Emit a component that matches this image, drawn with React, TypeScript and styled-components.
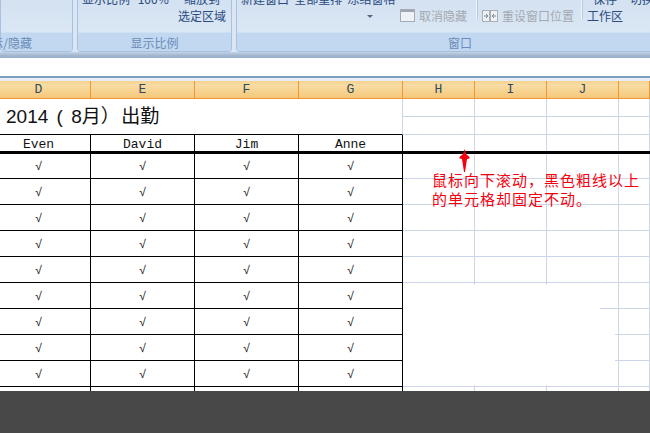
import React from "react";
import styled, { createGlobalStyle } from "styled-components";

const GlobalStyle = createGlobalStyle`
  html, body {
    margin: 0;
    padding: 0;
    background: #fff;
  }
`;

const Page = styled.div`
  width: 650px;
  height: 433px;
  display: flex;
  flex-direction: column;
  overflow: hidden;
  font-family: "Noto Sans CJK SC", "Liberation Sans", sans-serif;
  text-spacing-trim: space-all;
`;

/* ribbon */
const Ribbon = styled.div`
  height: 52px;
  flex: none;
  display: flex;
  gap: 4px;
  overflow: hidden;
  background: #dbe6f4;
`;

const Group = styled.section<{ $width: number }>`
  width: ${(p) => p.$width}px;
  flex: none;
  display: flex;
  flex-direction: column;
  box-sizing: border-box;
  border: 1px solid #a9c1de;
  border-top: 0;
  border-radius: 0 0 4px 4px;
  background: linear-gradient(#d3e1f1, #dfeaf6);
`;

const GroupBody = styled.div`
  height: 32px;
  flex: none;
  display: flex;
  align-items: flex-end;
  box-sizing: border-box;
  padding: 0 0 8px 4px;
`;

const Caption = styled.div<{ $clipLeft?: boolean }>`
  flex: 1;
  display: flex;
  align-items: center;
  justify-content: ${(p) => (p.$clipLeft ? "flex-end" : "center")};
  padding-right: ${(p) => (p.$clipLeft ? "40px" : "0")};
  font-size: 12px;
  color: #6b8bb8;
  background: #c1d8f0;
  border-top: 1px solid #cfe0f3;
  border-radius: 0 0 3px 3px;
  white-space: nowrap;
`;

const Stack = styled.div<{ $width: number; $align?: string }>`
  width: ${(p) => p.$width}px;
  flex: none;
  display: flex;
  flex-direction: column;
  align-items: ${(p) => p.$align || "flex-start"};
`;

const SwitchStack = styled(Stack)`
  margin-left: 7px;
`;

const Label = styled.div<{ $muted?: boolean; $wordGap?: number }>`
  height: 17px;
  line-height: 17px;
  font-size: 12px;
  white-space: nowrap;
  display: flex;
  align-items: center;
  gap: 4px;
  word-spacing: ${(p) => p.$wordGap || 0}px;
  color: ${(p) => (p.$muted ? "#a3a9b0" : "#2a4a80")};
`;

const Divider = styled.div`
  width: 1px;
  height: 19px;
  flex: none;
  margin: 0 5px 5px 0;
  align-self: flex-end;
  background: #eef4fb;
  box-shadow: 1px 0 0 #b5c9e2;
`;

const DropArrow = styled.div`
  width: 0;
  height: 0;
  margin: 5px 0 0 126px;
  border: 3px solid transparent;
  border-top: 3px solid #53678a;
`;

/* formula bar */
const RibbonEdge = styled.div`
  height: 6px;
  flex: none;
  background: linear-gradient(#c3d4e8, #a1b5cd 60%, #9bb0c9);
`;

const FormulaBar = styled.div`
  height: 18px;
  flex: none;
  background: #fff;
`;

const ColumnEdge = styled.div`
  height: 5px;
  flex: none;
  box-sizing: border-box;
  background: #e6edf6;
  border-top: 2px solid #7d9ebf;
`;

/* column headers */
const HeaderRow = styled.div`
  height: 18px;
  flex: none;
  display: flex;
  margin-left: -13px;
  box-sizing: border-box;
  border-bottom: 1px solid #f29536;
  background: linear-gradient(#f8d38f, #f7dca4 25%, #f5c878);
`;

const HeaderCell = styled.div<{ $width: number }>`
  width: ${(p) => p.$width}px;
  flex: none;
  box-sizing: border-box;
  border-right: 1px solid #f29536;
  text-align: center;
  font: 13px/17px "Liberation Mono", monospace;
  color: #2f4a5e;
`;

/* sheet */
const Sheet = styled.div`
  flex: 1;
  min-height: 0;
  overflow: hidden;
  position: relative;
`;

const FrozenPane = styled.div`
  display: flex;
  flex-direction: column;
  border-bottom: 3px solid #000;
`;

const TitleRow = styled.div`
  display: flex;
  height: 36px;
`;

const TitleCell = styled.div`
  width: 403px;
  flex: none;
  box-sizing: border-box;
  padding-left: 6px;
  font-family: "Liberation Sans", "Noto Sans CJK SC", sans-serif;
  font-size: 19px;
  line-height: 35px;
  word-spacing: 3px;
  color: #111;
  border-right: 1px solid #ccd6e8;
  border-bottom: 1px solid #000;
  white-space: nowrap;
`;

const GridStack = styled.div`
  flex: 1;
  display: flex;
  flex-direction: column;
`;

const Row = styled.div<{ $height: number; $bleed?: boolean }>`
  height: ${(p) => p.$height}px;
  flex: none;
  display: flex;
  margin-left: ${(p) => (p.$bleed ? "-13px" : "0")};
`;

const NameCell = styled.div`
  width: 104px;
  flex: none;
  box-sizing: border-box;
  padding-top: 4px;
  text-align: center;
  border-right: 1px solid #000;
  font: 13px/12px "Liberation Mono", monospace;
  color: #111;
`;

const CheckCell = styled.div`
  width: 104px;
  flex: none;
  box-sizing: border-box;
  display: flex;
  align-items: center;
  justify-content: center;
  border-right: 1px solid #000;
  border-bottom: 1px solid #000;
  font: italic 12px/16px "Liberation Sans", sans-serif;
  color: #111;
`;

const GridCell = styled.div<{ $width?: number; $noBottom?: boolean }>`
  width: ${(p) => (p.$width ? `${p.$width}px` : "auto")};
  flex: ${(p) => (p.$width ? "none" : "1")};
  box-sizing: border-box;
  border-right: 1px solid #ccd6e8;
  ${(p) => !p.$noBottom && "border-bottom: 1px solid #ccd6e8;"}
`;

/* the white smudge where the picture was retouched */
const Smudge = styled.div`
  position: absolute;
  left: 403px;
  top: 186px;
  width: 197px;
  height: 100px;
  background: #fff;
  &::after {
    content: "";
    position: absolute;
    left: 197px;
    top: 24px;
    width: 15px;
    height: 70px;
    background: #fff;
  }
`;

const Note = styled.div`
  position: absolute;
  left: 432px;
  top: 71px;
  width: 214px;
  font-size: 15px;
  line-height: 19px;
  letter-spacing: 1px;
  color: #f5000f;
`;

const Arrow = styled.svg`
  position: absolute;
  left: 459px;
  top: 50px;
`;

const Footer = styled.div`
  height: 42px;
  flex: none;
  background: #484848;
`;

const WindowIcon = () => (
  <svg width="15" height="13" viewBox="0 0 15 13">
    <rect x="0.5" y="0.5" width="14" height="12" fill="#eef2f7" stroke="#a4abb4" />
    <rect x="1" y="1" width="13" height="2" fill="#9fa6b0" />
  </svg>
);

const ResetIcon = () => (
  <svg width="16" height="13" viewBox="0 0 16 13">
    <rect x="0.5" y="1.5" width="7" height="11" fill="#eef2f7" stroke="#a9afb7" />
    <rect x="8.5" y="1.5" width="7" height="11" fill="#eef2f7" stroke="#a9afb7" />
    <path d="M2 7h3M4 5l2 2-2 2M14 7h-3M12 5l-2 2 2 2" fill="none" stroke="#7d858f" />
  </svg>
);

const columns = [
  { name: "D", width: 104 },
  { name: "E", width: 104 },
  { name: "F", width: 104 },
  { name: "G", width: 104 },
  { name: "H", width: 72 },
  { name: "I", width: 72 },
  { name: "J", width: 72 },
  { name: "", width: 31 },
];

const people = ["Even", "David", "Jim", "Anne"];

const rowHeights = [25, 26, 26, 26, 26, 26, 26, 26, 26, 26];

const GridCells = ({ noBottom }: { noBottom?: boolean }) => (
  <>
    <GridCell $width={72} $noBottom={noBottom} />
    <GridCell $width={72} $noBottom={noBottom} />
    <GridCell $width={72} $noBottom={noBottom} />
    <GridCell $noBottom={noBottom} />
  </>
);

export default function App() {
  return (
    <Page>
      <GlobalStyle />
      <Ribbon>
        <Group $width={73}>
          <GroupBody />
          <Caption $clipLeft>显示/隐藏</Caption>
        </Group>
        <Group $width={155}>
          <GroupBody>
            <Stack $width={96}>
              <Label $wordGap={5}>显示比例 100%</Label>
              <Label />
            </Stack>
            <Stack $width={48} $align="center">
              <Label>缩放到</Label>
              <Label>选定区域</Label>
            </Stack>
          </GroupBody>
          <Caption>显示比例</Caption>
        </Group>
        <Group $width={448}>
          <GroupBody>
            <Stack $width={159}>
              <Label $wordGap={2.5}>新建窗口 全部重排 冻结窗格</Label>
              <Label>
                <DropArrow />
              </Label>
            </Stack>
            <Stack $width={76}>
              <Label />
              <Label $muted>
                <WindowIcon />
                取消隐藏
              </Label>
            </Stack>
            <Divider />
            <Stack $width={99}>
              <Label />
              <Label $muted>
                <ResetIcon />
                重设窗口位置
              </Label>
            </Stack>
            <Divider />
            <Stack $width={36} $align="center">
              <Label>保存</Label>
              <Label>工作区</Label>
            </Stack>
            <SwitchStack $width={40}>
              <Label>切换</Label>
              <Label />
            </SwitchStack>
          </GroupBody>
          <Caption>窗口</Caption>
        </Group>
      </Ribbon>
      <RibbonEdge />
      <FormulaBar />
      <ColumnEdge />
      <HeaderRow>
        {columns.map((c, i) => (
          <HeaderCell key={i} $width={c.width}>
            {c.name}
          </HeaderCell>
        ))}
      </HeaderRow>
      <Sheet>
        <FrozenPane>
          <TitleRow>
            <TitleCell>2014 ( 8月）&#8202;出勤</TitleCell>
            <GridStack>
              <Row $height={18}>
                <GridCells />
              </Row>
              <Row $height={18}>
                <GridCells />
              </Row>
            </GridStack>
          </TitleRow>
          <Row $height={16} $bleed>
            {people.map((name) => (
              <NameCell key={name}>{name}</NameCell>
            ))}
            <GridCells noBottom />
          </Row>
        </FrozenPane>
        {rowHeights.map((h, i) => (
          <Row key={i} $height={h} $bleed>
            {people.map((name) => (
              <CheckCell key={name}>√</CheckCell>
            ))}
            <GridCells />
          </Row>
        ))}
        <Smudge />
        <Arrow width="11" height="24" viewBox="0 0 11 24">
          <path d="M5.5 0 L7 5 L10.5 8 L10.5 9.5 L8 10 L6 23 L5 23 L3 10 L0.5 9.5 L0.5 8 L4 5 Z" fill="#f5000f" />
        </Arrow>
        <Note>
          鼠标向下滚动，黑色粗线以上
          <br />
          的单元格却固定不动。
        </Note>
      </Sheet>
      <Footer />
    </Page>
  );
}
